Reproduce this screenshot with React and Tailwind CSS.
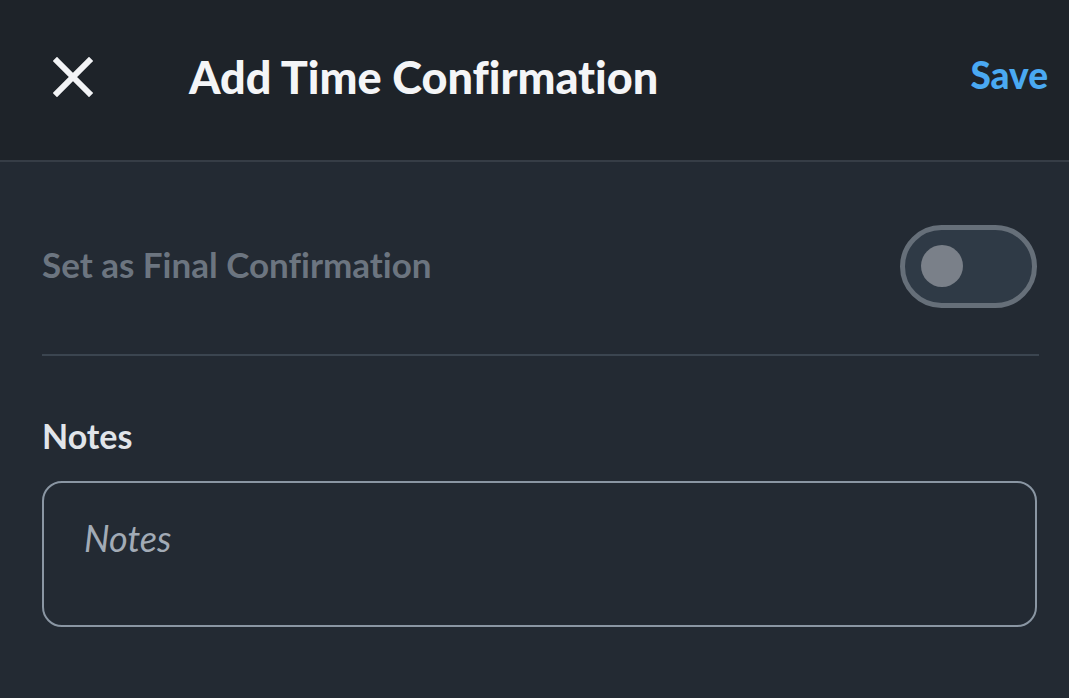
export default function App() {
    return (
        <div className="w-[1069px] h-[698px] bg-[#232a33] overflow-hidden [font-feature-settings:'liga'_0,'clig'_0]" style={{ fontFamily: "Lato, 'Open Sans', sans-serif" }}>
            {/* header */}
            <div className="h-[162px] bg-[#1e2329] border-b-2 border-[#363d46] flex items-center pl-[53px] pr-[21px] pb-[6px]">
                <svg width="40" height="40" viewBox="0 0 40 40" className="shrink-0">
                    <path d="M4 4 L36 36 M36 4 L4 36" stroke="#f3f4f6" strokeWidth="6" strokeLinecap="square" />
                </svg>
                <h1 className="ml-[96px] text-[45px] font-black text-[#f4f5f7] leading-none">Add Time Confirmation</h1>
                <button className="ml-auto text-[37px] font-black text-[#4aa9f2] leading-none -mt-[6px]">Save</button>
            </div>

            <div className="pl-[42px] pr-[30px]">
                <div className="h-[194px] flex items-center justify-between border-b-2 border-[#3b4550] pt-[16px]">
                    <span className="text-[35px] font-bold text-[#6c7580] leading-none -mt-[4px]">Set as Final Confirmation</span>
                    <div className="w-[137px] h-[83px] rounded-full border-[5px] border-[#666f79] bg-[#2f3a46] flex items-center pl-[16px] mr-[2px]">
                        <div className="w-[42px] h-[42px] rounded-full bg-[#7a8089]" />
                    </div>
                </div>

                <div className="pt-[63px]">
                    <div className="text-[34px] font-bold text-[#e1e5ea] leading-none">Notes</div>
                    <div className="mt-[28px] w-[995px] h-[146px] rounded-[20px] border-2 border-[#8a96a3] px-[40px] pt-[37px]">
                        <div className="text-[36px] italic text-[#a2abb6] leading-none">Notes</div>
                    </div>
                </div>
            </div>
        </div>
    );
}
